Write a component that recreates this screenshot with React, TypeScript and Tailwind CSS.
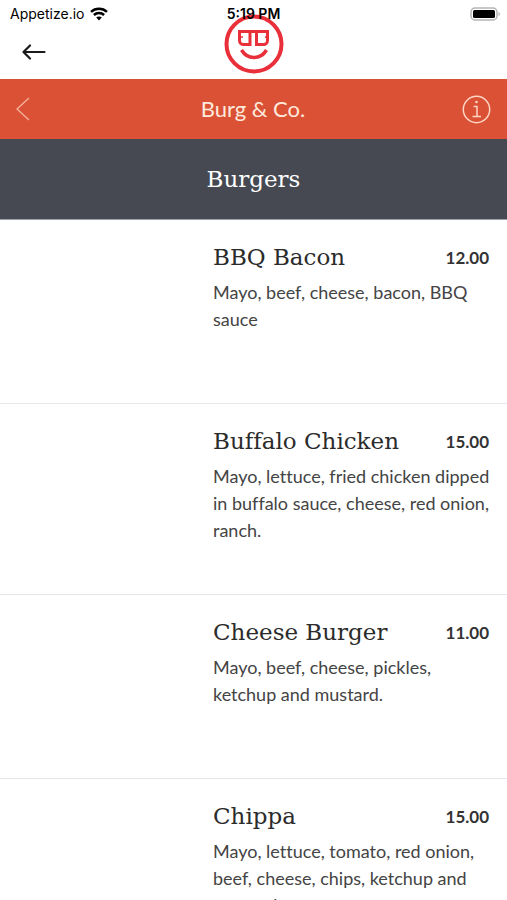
type MenuItem = {
  name: string;
  price: string;
  description: string;
};

const items: MenuItem[] = [
  { name: "BBQ Bacon", price: "12.00", description: "Mayo, beef, cheese, bacon, BBQ sauce" },
  { name: "Buffalo Chicken", price: "15.00", description: "Mayo, lettuce, fried chicken dipped in buffalo sauce, cheese, red onion, ranch." },
  { name: "Cheese Burger", price: "11.00", description: "Mayo, beef, cheese, pickles, ketchup and mustard." },
  { name: "Chippa", price: "15.00", description: "Mayo, lettuce, tomato, red onion, beef, cheese, chips, ketchup and mustard." },
];

function WifiIcon() {
  return (
    <svg width="18" height="14" viewBox="0 0 18 14" fill="none" stroke="#000" strokeWidth="2.5">
      <path d="M1 4.8C5.5.6 12.5.6 17 4.8" />
      <path d="M3.9 8c2.9-2.8 7.3-2.8 10.2 0" />
      <path d="M9 13.5l-2.8-2.9c1.5-1.5 4.1-1.5 5.6 0z" fill="#000" stroke="none" />
    </svg>
  );
}

function BatteryIcon() {
  return (
    <svg width="31" height="14" viewBox="0 0 31 14">
      <rect x="1" y="1" width="26" height="12" rx="4" fill="#fff" stroke="#b5b5b5" strokeWidth="1.5" />
      <rect x="3" y="3" width="22" height="8" rx="1.5" fill="#000" />
      <path d="M28.5 5v4c2-.7 2-3.3 0-4z" fill="#b5b5b5" />
    </svg>
  );
}

function Logo() {
  return (
    <svg width="60" height="60" viewBox="0 0 60 60" fill="none" stroke="#e9303a" strokeWidth="4">
      <circle cx="30" cy="30" r="27.5" />
      <path d="M14 17.5h31" strokeWidth="3" />
      <path d="M15.5 17v9.5a4 4 0 0 0 4 4H26V17" strokeWidth="3" />
      <path d="M32.5 17v13.5h7a4 4 0 0 0 4-4V17" strokeWidth="3" />
      <path d="M17 23h2M41 23h2" strokeWidth="1.5" />
      <path d="M17.5 36c6 10 19 10 25 0" strokeWidth="3.5" />
    </svg>
  );
}

function MenuRow({ item }: { item: MenuItem }) {
  return (
    <li className="flex min-h-[184px] border-b border-gray-200 pt-5 pr-4 pb-[50px]">
      <div className="w-[213px] shrink-0" />
      <div className="min-w-0 flex-1 [font-variant-ligatures:none]">
        <div className="flex items-center justify-between pr-0.5">
          <h3 className="font-['DejaVu_Serif',serif] text-[23px] leading-[35px] text-[#2b2b2b]">{item.name}</h3>
          <span className="text-[17px] font-bold text-[#333]">{item.price}</span>
        </div>
        <p className="mt-1 text-lg leading-[27px] text-[#444]">{item.description}</p>
      </div>
    </li>
  );
}

export default function App() {
  return (
    <main className="flex h-screen flex-col overflow-hidden bg-white font-['Lato',sans-serif]">
      <header className="relative h-[79px] shrink-0">
        <div className="absolute inset-x-0 top-3.5 flex justify-center">
          <Logo />
        </div>
        <div className="relative grid h-7 grid-cols-3 items-center font-['Inter',sans-serif] text-sm text-black">
          <div className="flex items-center gap-1.5 pl-2.5">
            <span>Appetize.io</span>
            <WifiIcon />
          </div>
          <span className="text-center font-semibold">5:19 PM</span>
          <div className="flex justify-end pr-1.5">
            <BatteryIcon />
          </div>
        </div>
        <button aria-label="Back" className="relative ml-5 flex h-12 w-7 items-center justify-center">
          <svg width="24" height="16" viewBox="0 0 24 16" fill="none" stroke="#1a1a1a" strokeWidth="2.2" strokeLinecap="round" strokeLinejoin="round">
            <path d="M22.5 8H2M8 1.5L1.5 8 8 14.5" />
          </svg>
        </button>
      </header>

      <div className="flex h-[60px] shrink-0 items-center justify-between bg-[#da5135] px-4 text-[#ffe9dc]">
        <button aria-label="Previous" className="flex w-7">
          <svg width="14" height="24" viewBox="0 0 14 24" fill="none" stroke="#f6b39c" strokeWidth="1.3">
            <path d="M13 1L1 12l12 11" />
          </svg>
        </button>
        <h1 className="text-[22px] leading-7">Burg &amp; Co.</h1>
        <button aria-label="Information" className="flex">
          <svg width="29" height="29" viewBox="0 0 29 29" fill="none" stroke="#ffd5c4" strokeWidth="1.5">
            <circle cx="14.5" cy="14.5" r="13.2" />
            <path d="M11.5 11.5H15v10M10.5 21.5H19" />
            <circle cx="14.5" cy="7" r="1.3" fill="#ffd5c4" stroke="none" />
          </svg>
        </button>
      </div>

      <h2 className="flex h-[81px] shrink-0 items-center justify-center border-b border-gray-400 bg-[#464852] font-['DejaVu_Serif',serif] text-[23px] leading-8 text-white">Burgers</h2>

      <ul>
        {items.map((item) => (
          <MenuRow key={item.name} item={item} />
        ))}
      </ul>
    </main>
  );
}
